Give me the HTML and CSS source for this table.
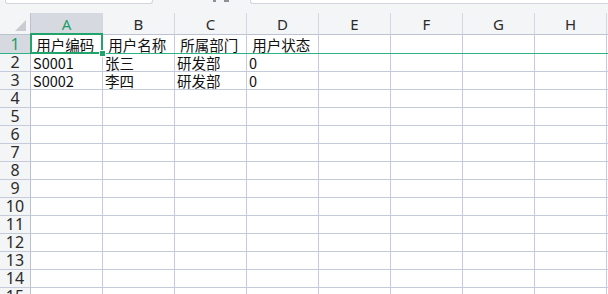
FILE: index.html
```html
<!DOCTYPE html>
<html lang="zh-CN">
<head>
  <meta charset="UTF-8" />
  <meta name="viewport" content="width=device-width, initial-scale=1.0"/>
  <title>用户表</title>
  <link rel="stylesheet" href="styles.css">
</head>
<body>

  <!-- name box + formula bar (only their lower edge is on screen) -->
  <div class="topbar">
    <div class="namebox"></div>
    <div class="fx"><span></span><span></span></div>
    <div class="formula"></div>
  </div>

  <div class="sheet-wrap">
    <div class="sheet" id="sheet"></div>

    <!-- active cell A1 and the frozen row line -->
    <div class="freeze-line"></div>
    <div class="active-cell"></div>
    <div class="fill-handle"></div>
  </div>

  <script>
    const sheet = document.getElementById('sheet');
    const cols = ['A', 'B', 'C', 'D', 'E', 'F', 'G', 'H', ''];
    const rowCount = 15;

    const data = [
      [' 用户编码', ' 用户名称', ' 所属部门', ' 用户状态'],
      ['S0001', '张三', '研发部', '0'],
      ['S0002', '李四', '研发部', '0']
    ];

    function cell(cls, text) {
      const div = document.createElement('div');
      div.className = cls;
      if (text) div.textContent = text;
      sheet.appendChild(div);
      return div;
    }

    // header row
    cell('corner').innerHTML = '<i class="tri"></i>';
    cols.forEach((c, i) => {
      cell('col-head' + (i === 0 ? ' active' : ''), c);
    });

    // body rows
    for (let r = 1; r <= rowCount; r++) {
      cell('row-head' + (r === 1 ? ' active' : ''), String(r));
      const values = data[r - 1] || [];
      cols.forEach((c, i) => {
        cell('cell' + (r === 1 ? ' first' : ''), values[i] || '');
      });
    }
  </script>
</body>
</html>
```

FILE: styles.css
```css
body {
  margin: 0;
  width: 608px;
  height: 294px;
  overflow: hidden;
  background: #fff;
  font-family: 'Noto Sans CJK SC', 'Noto Sans', sans-serif;
}

/* top strip */
.topbar {
  height: 13px;
  background: #f4f5f7;
  display: flex;
  align-items: flex-start;
}
.namebox,
.formula {
  height: 3px;
  background: #fff;
  border: 1px solid #d2d5db;
  border-top: none;
}
.namebox {
  width: 146px;
  margin-left: 5px;
  border-radius: 0 0 3px 3px;
}
.fx {
  width: 97px;
  display: flex;
  gap: 8px;
  padding-left: 60px;
  box-sizing: border-box;
}
.fx span {
  width: 3px;
  height: 2px;
  background: #8d9096;
}
.fx span + span {
  width: 5px;
}
.formula {
  flex: 1;
  border-right: none;
  border-radius: 0 0 0 3px;
}

/* grid */
.sheet-wrap {
  position: relative;
  height: 281px;
  overflow: hidden;
}
.sheet {
  display: grid;
  grid-template-columns: 31px repeat(8, 72px) 1fr;
  grid-template-rows: 22px 19px repeat(14, 18px);
}
.sheet > div {
  box-sizing: border-box;
  white-space: pre;
  min-width: 0;
}

.corner,
.col-head,
.row-head {
  background: #f4f5f7;
  color: #2b2b2b;
  font-family: 'Noto Sans', 'Noto Sans CJK SC', sans-serif;
  display: flex;
  align-items: center;
  justify-content: center;
}
.corner {
  position: relative;
  border-right: 1px solid #bcc2d1;
  border-bottom: 1px solid #bcc2d1;
}
.corner .tri {
  position: absolute;
  right: 4px;
  bottom: 3px;
  width: 0;
  height: 0;
  border-left: 11px solid transparent;
  border-bottom: 11px solid #c9ccd2;
}
.col-head {
  font-size: 15px;
  line-height: 20px;
  border-right: 1px solid #d3d7e0;
  border-bottom: 1px solid #bcc2d1;
}
.row-head {
  font-size: 16px;
  line-height: 17px;
  border-right: 1px solid #bcc2d1;
  border-bottom: 1px solid #c6cbdb;
}
.col-head.active,
.row-head.active {
  background: #d6d9df;
  color: #1f9e6c;
}

.cell {
  border-right: 1px solid #c6cbdb;
  border-bottom: 1px solid #c6cbdb;
  font-size: 14.5px;
  line-height: 17px;
  height: 18px;
  padding: 0 0 0 2px;
  color: #111;
}
.cell.first {
  padding-top: 1px;
  height: 19px;
}

/* overlays */
.freeze-line {
  position: absolute;
  left: 0;
  right: 0;
  top: 40px;
  height: 1px;
  background: #2db482;
}
.active-cell {
  position: absolute;
  left: 30px;
  top: 20px;
  width: 73px;
  height: 21px;
  box-sizing: border-box;
  border: 2px solid #21a36c;
}
.fill-handle {
  position: absolute;
  left: 99px;
  top: 37px;
  width: 7px;
  height: 7px;
  background: #21a36c;
  border: 1px solid #fff;
  box-sizing: border-box;
}
```
